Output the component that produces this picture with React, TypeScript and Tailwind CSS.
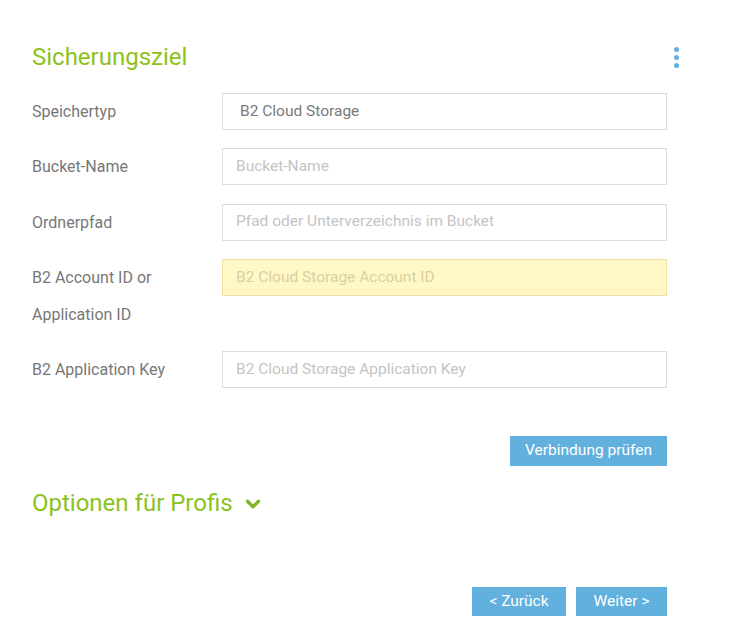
import { ChevronDown } from 'lucide-react'

type FieldProps = {
  label: string[]
  placeholder?: string
  value?: string
  highlight?: boolean
}

function Field({ label, placeholder, value, highlight }: FieldProps) {
  return (
    <div className="flex items-start">
      <div className="w-[190px] shrink-0 text-[16px] leading-[37px] text-[#777777]">
        {label.map((line) => (
          <div key={line}>{line}</div>
        ))}
      </div>
      <div
        className={
          highlight
            ? 'flex h-[37px] flex-1 items-center border border-[#efe2a2] bg-[#fff8c5] px-[13px] text-[15.5px] text-[#d9cfa6]'
            : 'flex h-[37px] flex-1 items-center border border-[#dcdcdc] bg-white px-[13px] text-[15.5px] text-[#c4c4c4]'
        }
      >
        {value ? (
          <span className="pl-[4px] text-[#7a7a7a]">{value}</span>
        ) : (
          <span>{placeholder}</span>
        )}
      </div>
    </div>
  )
}

export default function App() {
  return (
    <div
      className="min-h-[639px] w-[730px] bg-white pt-[42px] pl-[32px]"
      style={{ fontFamily: 'Roboto, "Noto Sans", sans-serif' }}
    >
      <div className="flex w-[647px] items-center justify-between">
        <h1 className="text-[24px] leading-[30px] font-normal text-[#8cc21c]">
          Sicherungsziel
        </h1>
        <div className="flex flex-col gap-[3px]">
          <span className="h-[5px] w-[5px] rounded-full bg-[#5fb0df]" />
          <span className="h-[5px] w-[5px] rounded-full bg-[#5fb0df]" />
          <span className="h-[5px] w-[5px] rounded-full bg-[#5fb0df]" />
        </div>
      </div>

      <div className="mt-[21px] flex w-[635px] flex-col gap-[18.25px]">
        <Field label={['Speichertyp']} value="B2 Cloud Storage" />
        <Field label={['Bucket-Name']} placeholder="Bucket-Name" />
        <Field label={['Ordnerpfad']} placeholder="Pfad oder Unterverzeichnis im Bucket" />
        <Field
          label={['B2 Account ID or', 'Application ID']}
          placeholder="B2 Cloud Storage Account ID"
          highlight
        />
        <Field
          label={['B2 Application Key']}
          placeholder="B2 Cloud Storage Application Key"
        />
      </div>

      <div className="mt-[48px] flex w-[635px] justify-end">
        <button className="h-[30px] bg-[#62b0dd] px-[15px] text-[15.5px] text-white">
          Verbindung prüfen
        </button>
      </div>

      <div className="mt-[22px] flex items-center gap-[9px] text-[#8cc21c]">
        <span className="text-[24px] leading-[30px]">Optionen für Profis</span>
        <ChevronDown size={22} strokeWidth={3.6} className="mt-[1px] text-[#7db62a]" />
      </div>

      <div className="mt-[69px] flex w-[635px] justify-end gap-[10px]">
        <button className="h-[29px] w-[94px] bg-[#62b0dd] text-[15.5px] text-white">
          &lt; Zurück
        </button>
        <button className="h-[29px] w-[91px] bg-[#62b0dd] text-[15.5px] text-white">
          Weiter &gt;
        </button>
      </div>
    </div>
  )
}
